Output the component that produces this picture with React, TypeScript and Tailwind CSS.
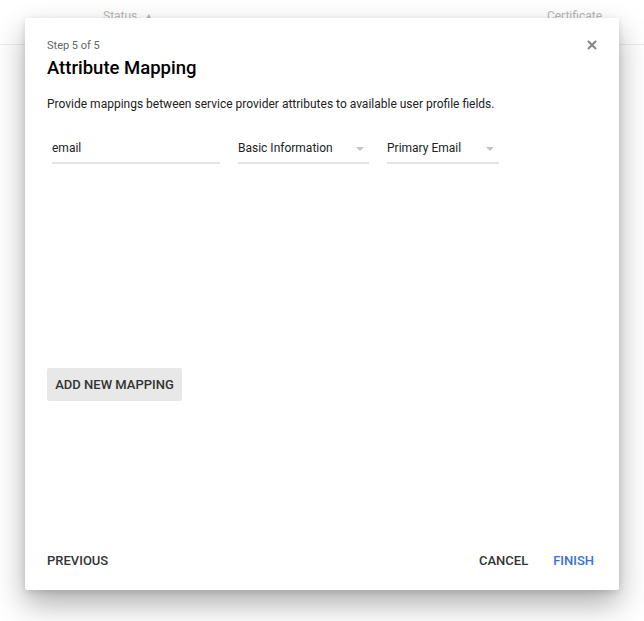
const Caret = () => (
  <svg width="8" height="4" viewBox="0 0 8 4" className="shrink-0">
    <path d="M0 0 L8 0 L4 4 Z" fill="#c4c4c4" />
  </svg>
);

const SelectField = ({ label, width }: { label: string; width: string }) => (
  <div className={`${width} flex items-center justify-between border-b-2 border-[#e3e3e3] pb-[6px]`}>
    <span className="text-[12px] leading-[16px] text-[#222]">{label}</span>
    <span className="mr-[5px] mt-[2px]">
      <Caret />
    </span>
  </div>
);

const App = () => {
  return (
    <div
      className="relative w-[644px] h-[621px] bg-white overflow-hidden"
      style={{ fontFamily: 'Roboto, "Liberation Sans", sans-serif' }}
    >
      {/* Page behind the dialog */}
      <div className="flex items-start h-[45px] border-b border-[#ececec] pt-[8px] text-[12px] leading-[16px] text-[#b8b8b8]">
        <div className="ml-[103px] flex items-center gap-[8px]">
          <span>Status</span>
          <span className="text-[7px]">▲</span>
        </div>
        <div className="ml-auto mr-[42px]">Certificate</div>
      </div>

      {/* Dialog */}
      <div className="absolute left-[25px] top-[18px] w-[594px] h-[572px] bg-white rounded-[2px] shadow-[0_14px_30px_rgba(0,0,0,0.32),0_2px_6px_rgba(0,0,0,0.12)] flex flex-col px-[22px] pt-[20px] pb-[21px]">
        <div className="flex items-start justify-between">
          <div>
            <div className="text-[11px] leading-[16px] text-[#666]">Step 5 of 5</div>
            <h2 className="mt-[2px] text-[18.5px] leading-[24px] font-medium text-black">Attribute Mapping</h2>
          </div>
          <button className="mt-[1px] mr-[-1px]">
            <svg width="12" height="12" viewBox="0 0 12 12">
              <path d="M2 2 L10 10 M10 2 L2 10" stroke="#858585" strokeWidth="2" />
            </svg>
          </button>
        </div>

        <p className="mt-[16px] text-[12px] leading-[16px] text-[#222]">
          Provide mappings between service provider attributes to available user profile fields.
        </p>

        {/* Mapping row */}
        <div className="mt-[28px] flex items-end gap-[18px]">
          <div className="ml-[5px] w-[168px] border-b-2 border-[#e3e3e3] pb-[6px]">
            <div className="text-[12px] leading-[16px] text-[#222]">email</div>
          </div>
          <SelectField label="Basic Information" width="w-[131px]" />
          <SelectField label="Primary Email" width="w-[112px]" />
        </div>

        <div className="mt-[204px]">
          <button className="h-[33px] w-[135px] rounded-[2px] bg-[#e8e8e8] text-[13px] font-medium text-[#333] uppercase">
            Add new mapping
          </button>
        </div>

        {/* Footer */}
        <div className="mt-auto flex items-center text-[13px] leading-[16px] font-medium">
          <button className="uppercase text-[#333]">Previous</button>
          <div className="ml-auto mr-[3px] flex items-center gap-[25px]">
            <button className="uppercase text-[#333]">Cancel</button>
            <button className="uppercase text-[#3b6fd8]">Finish</button>
          </div>
        </div>
      </div>
    </div>
  );
};

export default App;
